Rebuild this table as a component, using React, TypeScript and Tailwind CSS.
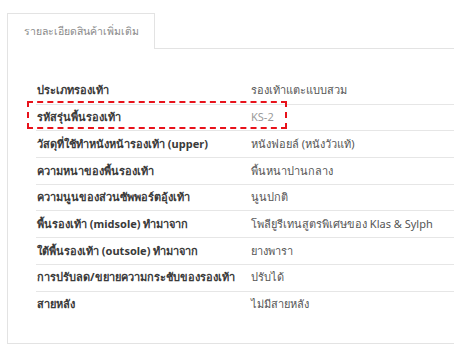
const specs = [
  { label: 'ประเภทรองเท้า', value: 'รองเท้าแตะแบบสวม' },
  { label: 'รหัสรุ่นพื้นรองเท้า', value: 'KS-2', highlight: true },
  { label: 'วัสดุที่ใช้ทำหนังหน้ารองเท้า (upper)', value: 'หนังฟอยล์ (หนังวัวแท้)' },
  { label: 'ความหนาของพื้นรองเท้า', value: 'พื้นหนาปานกลาง' },
  { label: 'ความนูนของส่วนซัพพอร์ตอุ้งเท้า', value: 'นูนปกติ' },
  { label: 'พื้นรองเท้า (midsole) ทำมาจาก', value: 'โพลียูรีเทนสูตรพิเศษของ Klas & Sylph' },
  { label: 'ใต้พื้นรองเท้า (outsole) ทำมาจาก', value: 'ยางพารา' },
  { label: 'การปรับลด/ขยายความกระชับของรองเท้า', value: 'ปรับได้' },
  { label: 'สายหลัง', value: 'ไม่มีสายหลัง' },
];

export default function App() {
  return (
    <div
      className="w-[454px] h-[350px] overflow-hidden bg-white pt-[13px] pl-[7px]"
      style={{ fontFamily: '"Noto Sans", "Liberation Sans", sans-serif' }}
    >
      {/* Tab header */}
      <div className="flex">
        <div className="relative z-10 -mb-px w-[148px] h-[36px] flex items-center pl-4 border border-b-0 border-[#e3e3e3] bg-white text-[10.5px] text-[#8a8a8a] whitespace-nowrap">
          รายละเอียดสินค้าเพิ่มเติม
        </div>
      </div>

      {/* Tab panel */}
      <div className="w-[520px] h-[296px] border border-[#e3e3e3] pt-[28px] pl-[28px]">
        <div className="w-[480px]">
          {specs.map((row, i) => (
            <div
              key={row.label}
              className={`relative flex h-[26.7px] items-center text-[11px] whitespace-nowrap ${
                i === 0 ? '' : 'border-t border-[#e6e6e6]'
              }`}
            >
              {row.highlight && (
                <div className="absolute -left-[9px] -top-[4px] w-[260px] h-[28px] border-2 border-dashed border-[#e8121b]" />
              )}
              <div className="w-[215px] pl-[1px] font-bold text-[#3a3a3a]">{row.label}</div>
              <div className={row.highlight ? 'text-[#9a9a9a]' : 'text-[#555]'}>{row.value}</div>
            </div>
          ))}
        </div>
      </div>
    </div>
  );
}
